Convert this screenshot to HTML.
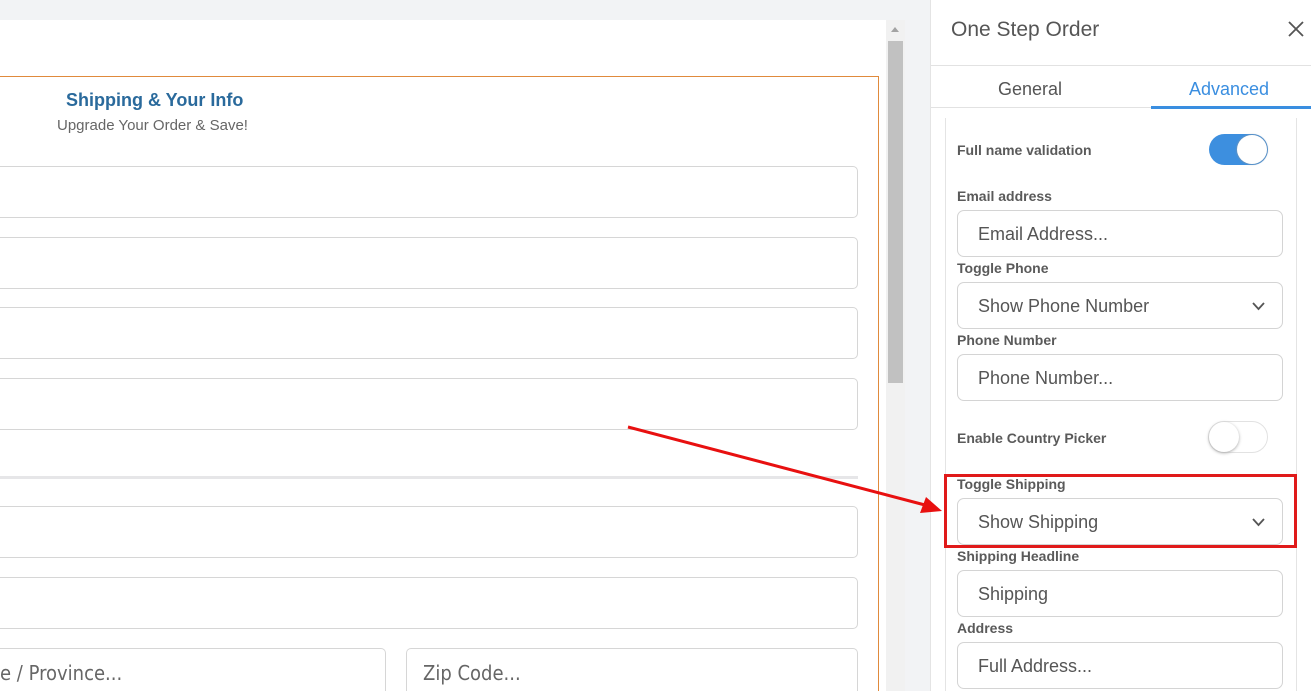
<!DOCTYPE html>
<html style="overflow:hidden;width:1311px;height:691px"><head><style>
*{box-sizing:border-box;margin:0;padding:0}
body{width:1311px;height:691px;overflow:hidden;background:#f2f3f5;font-family:"Liberation Sans",sans-serif;position:relative}
.a{position:absolute}
.in{position:absolute;border:1px solid #d6d6d6;border-radius:5px;background:#fff}
.ph{position:absolute;color:#666;font-size:20px;font-family:"DejaVu Sans Condensed","Liberation Sans Narrow",sans-serif;font-weight:300}
.lab{position:absolute;left:957px;font-size:14px;font-weight:bold;color:#5a5a5a}
.pi{position:absolute;left:957px;width:326px;height:47px;border:1px solid #d4d4d4;border-radius:7px;background:#fff;font-size:18px;color:#555;padding:13px 0 0 20px}
.chev{position:absolute;right:17px;top:19px}
</style></head><body>
<div class="a" style="left:0;top:20px;width:886px;height:671px;background:#fff"></div>
<div class="a" style="left:886px;top:20px;width:19px;height:671px;background:#f1f1f1"></div>
<div class="a" style="left:888px;top:41px;width:15px;height:342px;background:#c1c1c1"></div>
<div class="a" style="left:891px;top:27px;width:0;height:0;border-left:4px solid transparent;border-right:4px solid transparent;border-bottom:5px solid #a3a3a3"></div>
<div class="a" style="left:-2px;top:76px;width:881px;height:615px;border:1px solid #e08a3c;border-bottom:none"></div>
<div class="a" style="left:66px;top:90px;font-size:18px;font-weight:bold;color:#2a6a9c">Shipping &amp; Your Info</div>
<div class="a" style="left:57px;top:117px;font-size:15px;color:#666">Upgrade Your Order &amp; Save!</div>
<div class="in" style="left:-10px;top:166px;width:868px;height:52px"></div>
<div class="in" style="left:-10px;top:237px;width:868px;height:52px"></div>
<div class="in" style="left:-10px;top:307px;width:868px;height:52px"></div>
<div class="in" style="left:-10px;top:378px;width:868px;height:52px"></div>
<div class="a" style="left:0;top:476px;width:858px;height:3px;background:#e6e6e8"></div>
<div class="in" style="left:-10px;top:506px;width:868px;height:52px"></div>
<div class="in" style="left:-10px;top:577px;width:868px;height:52px"></div>
<div class="in" style="left:-10px;top:648px;width:396px;height:43px;border-bottom:none;border-radius:5px 5px 0 0"></div>
<div class="in" style="left:406px;top:648px;width:452px;height:43px;border-bottom:none;border-radius:5px 5px 0 0"></div>
<div class="ph" style="left:0;top:661px">e / Province...</div>
<div class="ph" style="left:423px;top:661px">Zip Code...</div>

<div class="a" style="left:930px;top:0;width:381px;height:691px;background:#fff;border-left:1px solid #e4e4e4"></div>
<div class="a" style="left:951px;top:18px;font-size:21px;color:#555">One Step Order</div>
<svg class="a" style="left:1288px;top:21px" width="16" height="16"><path d="M1 1L15 15M15 1L1 15" stroke="#555" stroke-width="1.8"/></svg>
<div class="a" style="left:931px;top:65px;width:380px;height:1px;background:#e2e2e2"></div>
<div class="a" style="left:998px;top:79px;font-size:18px;color:#555">General</div>
<div class="a" style="left:1189px;top:79px;font-size:18px;color:#3a8ee0">Advanced</div>
<div class="a" style="left:931px;top:107px;width:380px;height:1px;background:#e2e2e2"></div>
<div class="a" style="left:1151px;top:106px;width:160px;height:3px;background:#3a8ee0"></div>
<div class="a" style="left:945px;top:118px;width:352px;height:573px;border-left:1px solid #e4e4e4;border-right:1px solid #e4e4e4"></div>
<div class="lab" style="top:142px">Full name validation</div>
<div class="a" style="left:1209px;top:134px;width:59px;height:31px;border-radius:16px;background:#3d8fdf"></div>
<div class="a" style="left:1237px;top:135px;width:30px;height:29px;border-radius:50%;background:#fff;box-shadow:0 0 2px #999"></div>
<div class="lab" style="top:188px">Email address</div>
<div class="pi" style="top:210px">Email Address...</div>
<div class="lab" style="top:260px">Toggle Phone</div>
<div class="pi" style="top:282px">Show Phone Number<svg class="chev" width="13" height="9"><path d="M1 1L6.5 7L12 1" stroke="#555" stroke-width="1.8" fill="none"/></svg></div>
<div class="lab" style="top:332px">Phone Number</div>
<div class="pi" style="top:354px">Phone Number...</div>
<div class="lab" style="top:430px">Enable Country Picker</div>
<div class="a" style="left:1208px;top:421px;width:60px;height:32px;border-radius:16px;background:#fff;border:1px solid #e2e2e2"></div>
<div class="a" style="left:1209px;top:422px;width:30px;height:30px;border-radius:50%;background:#fff;box-shadow:0 1px 3px #aaa"></div>
<div class="lab" style="top:476px">Toggle Shipping</div>
<div class="pi" style="top:498px">Show Shipping<svg class="chev" width="13" height="9"><path d="M1 1L6.5 7L12 1" stroke="#555" stroke-width="1.8" fill="none"/></svg></div>
<div class="a" style="left:944px;top:474px;width:353px;height:74px;border:3px solid #e01a1a"></div>
<div class="lab" style="top:548px">Shipping Headline</div>
<div class="pi" style="top:570px">Shipping</div>
<div class="lab" style="top:620px">Address</div>
<div class="pi" style="top:642px">Full Address...</div>

<svg class="a" style="left:0;top:0" width="1311" height="691"><line x1="628" y1="427" x2="925" y2="505" stroke="#e81010" stroke-width="3"/><polygon points="942,511 920,513 926,497" fill="#e81010"/></svg>
</body></html>
